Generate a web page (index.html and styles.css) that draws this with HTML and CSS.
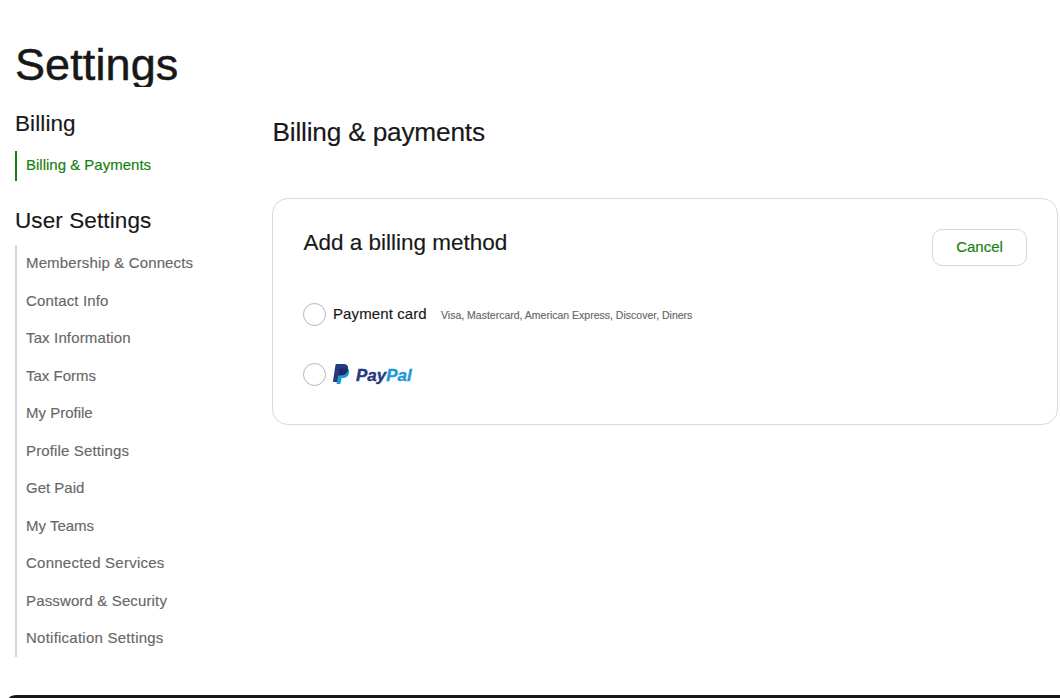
FILE: index.html
```html
<!DOCTYPE html>
<html lang="en">
<head>
<meta charset="utf-8">
<title>Settings</title>
<link rel="stylesheet" href="styles.css">
</head>
<body>
<div class="page">
  <h1 class="title">Settings</h1>
  <div class="columns">
    <nav class="sidebar">
      <h2 class="nav-heading">Billing</h2>
      <ul class="nav-list nav-list-active">
        <li>Billing &amp; Payments</li>
      </ul>
      <h2 class="nav-heading nav-heading-user">User Settings</h2>
      <ul class="nav-list">
        <li class="spaced">Membership &amp; Connects</li>
        <li class="spaced">Contact Info</li>
        <li class="spaced">Tax Information</li>
        <li>Tax Forms</li>
        <li>My Profile</li>
        <li class="spaced">Profile Settings</li>
        <li>Get Paid</li>
        <li>My Teams</li>
        <li class="spaced-wide">Connected Services</li>
        <li class="spaced">Password &amp; Security</li>
        <li class="spaced-wide">Notification Settings</li>
      </ul>
    </nav>
    <main class="content">
      <h2 class="content-title">Billing &amp; payments</h2>
      <section class="card">
        <header class="card-header">
          <h3 class="card-title">Add a billing method</h3>
          <button class="cancel" type="button">Cancel</button>
        </header>
        <label class="option">
          <span class="radio"></span>
          <span class="option-name">Payment card</span>
          <span class="option-note">Visa, Mastercard, American Express, Discover, Diners</span>
        </label>
        <label class="option option-paypal">
          <span class="radio"></span>
          <svg class="paypal-mark" width="17" height="20" viewBox="0 0 17 20">
            <path fill="#1b9ad6" d="M15.2 5c1.1 1.1 1.2 2.6.8 4.3-.8 3.3-2.900 4.700-6 4.700H8.700L7.600 19.200c-.1.500-.4.800-.9.800H3.500l2-9z"/>
            <path fill="#253b80" d="M3.300 0H10c3.700 0 5.600 1.700 5.100 5.100-.6 4.100-3.300 6.200-7.300 6.200H6.200c-.6 0-.9.300-1 .9L4.300 18H.500c-.4 0-.5-.3-.5-.7L2.500.7c.1-.5.400-.7.800-.7z"/>
            <path fill="#20296c" d="M6.300 5.200c.1-.5.400-.7.900-.7h5.300c1.100 0 1.900.1 2.600.5-.5 4.100-3.200 6.300-7.300 6.300H6.200c-.5 0-.8.200-.9.700z"/>
          </svg>
          <span class="paypal-word">Pay<span class="paypal-pal">Pal</span></span>
        </label>
      </section>
    </main>
  </div>
  <footer class="footer"></footer>
</div>
</body>
</html>
```
FILE: styles.css
```css
* { box-sizing: border-box; }
body {
  margin: 0;
  background: #fff;
  color: #181818;
  font-family: "Liberation Sans", Arial, sans-serif;
  font-size: 15px;
  -webkit-text-stroke: 0.15px currentColor;
}
h1, h2, h3, ul { margin: 0; padding: 0; font-weight: 400; }
.page {
  height: 698px;
  overflow: hidden;
  display: flex;
  flex-direction: column;
}
.title {
  margin: 42px 0 0 15px;
  height: 45px;
  line-height: 45px;
  font-size: 45px;
  letter-spacing: 0.1px;
  overflow: hidden;
  -webkit-text-stroke: 0.5px #181818;
}
.columns { display: flex; flex: 1; padding-left: 15px; }
.sidebar { width: 257px; padding-top: 23px; }
.nav-heading { font-size: 22.5px; line-height: 28px; letter-spacing: 0.1px; }
.nav-heading-user { margin-top: 26px; }
.nav-list {
  list-style: none;
  margin-top: 10px;
  height: 412px;
  padding-left: 9px;
  border-left: 2px solid #d5d7d8;
  color: #676767;
}
.nav-list li { height: 37.5px; line-height: 36px; white-space: nowrap; }
.nav-list.nav-list-active { margin-top: 13px; border-color: #14800f; color: #14800f; height: 30px; }
.nav-list-active li { height: 30px; line-height: 27px; }
.nav-list .spaced { letter-spacing: 0.14px; }
.nav-list .spaced-wide { letter-spacing: 0.24px; }
.content { width: 786px; padding-top: 28px; }
.content-title { padding-left: 0.5px; font-size: 26.25px; line-height: 34px; letter-spacing: -0.2px; }
.card {
  margin-top: 49px;
  height: 227px;
  padding: 30px;
  border: 1px solid #d9d9d9;
  border-radius: 16px;
}
.card-header { display: flex; justify-content: space-between; }
.card-title { padding-left: 0.5px; font-size: 22.5px; line-height: 27px; }
.cancel {
  width: 95px;
  height: 37px;
  padding: 0 0 2px;
  border: 1px solid #d5d7d8;
  border-radius: 10px;
  background: #fff;
  color: #14800f;
  font: inherit;
}
.option { display: flex; align-items: center; height: 24px; margin-top: 36px; }
.option-paypal { margin-top: 36px; }
.radio { width: 23px; height: 23px; border: 1px solid #b5b5b5; border-radius: 50%; }
.option-name { margin-left: 7px; width: 108px; line-height: 20px; padding-bottom: 1px; letter-spacing: 0.1px; }
.option-note { font-size: 10.5px; color: #676767; white-space: nowrap; padding-top: 1px; }
.paypal-mark { margin-left: 7px; }
.paypal-word {
  margin-left: 6px;
  padding-top: 3px;
  font: italic 700 17px/20px "Liberation Sans", Arial, sans-serif;
  -webkit-text-stroke: 0.4px currentColor;
  color: #253b80;
}
.paypal-pal { color: #1b9ad6; -webkit-text-stroke-color: #1b9ad6; }
.footer { height: 3px; margin-left: 9px; background: #181818; border-top-left-radius: 8px 3px; }
```
